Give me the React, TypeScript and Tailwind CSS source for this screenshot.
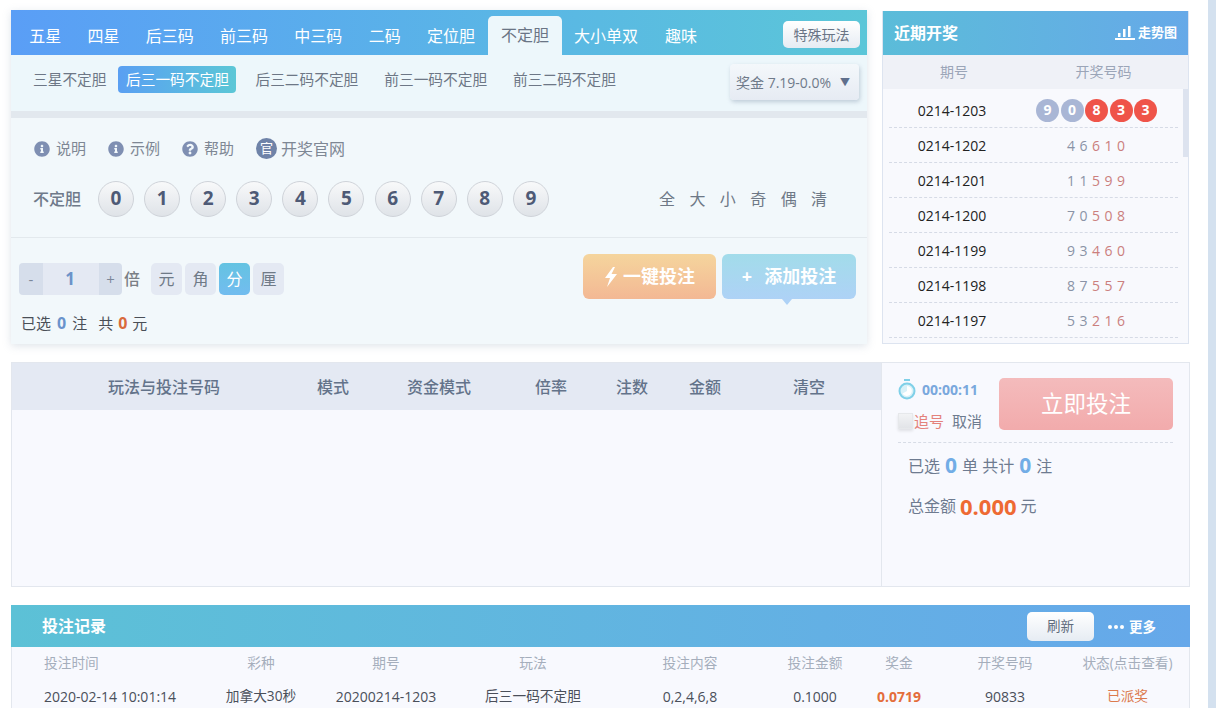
import React from "react";
import { FaInfoCircle, FaQuestionCircle } from "react-icons/fa";

const tabs = ["五星", "四星", "后三码", "前三码", "中三码", "二码", "定位胆"];
const subs = ["后三二码不定胆", "前三一码不定胆", "前三二码不定胆"];
const rows: [string, string][] = [
  ["0214-1202", "46610"],
  ["0214-1201", "11599"],
  ["0214-1200", "70508"],
  ["0214-1199", "93460"],
  ["0214-1198", "87557"],
  ["0214-1197", "53216"],
];
const recCols = "grid grid-cols-[184px_130px_120px_174px_140px_110px_58px_154px_91px] text-center";

function Help({ icon, label, w }: { icon: React.ReactNode; label: string; w: string }) {
  return (
    <div className={`flex items-center gap-[6px] ${w}`}>
      <span className="text-[#7f8fb2] text-[16px]">{icon}</span>
      <span className="text-[15px] text-[#7e8794]">{label}</span>
    </div>
  );
}

function Unit({ t, active }: { t: string; active?: boolean }) {
  return (
    <div
      className={`w-[31px] h-[32px] rounded-[5px] flex items-center justify-center text-[16px] ${
        active ? "bg-gradient-to-b from-[#64c3e2] to-[#72bcef] text-white" : "bg-[#e4e9f3] text-[#6f7a87]"
      }`}
    >
      {t}
    </div>
  );
}

export default function App() {
  return (
    <div className="w-[1216px] h-[708px] overflow-hidden flex bg-white font-['Open_Sans','Noto_Sans_CJK_SC',sans-serif]">
      <div className="w-[1208px] pl-[11px] pt-[10px]">
        {/* top */}
        <div className="flex h-[334px]">
          <div className="w-[856px] h-[334px] shadow-[0_2px_8px_rgba(150,165,185,0.3)] flex flex-col bg-[#f2f8fb]">
            <div className="h-[45px] flex items-end bg-gradient-to-r from-[#5a9ef6] to-[#5bc6d8] pl-[5px] relative">
              {tabs.map((t) => (
                <div key={t} className="px-[13.15px] h-[37px] text-[16px] leading-[37px] text-white">
                  {t}
                </div>
              ))}
              <div className="h-[39px] w-[74px] rounded-t-[5px] bg-[#edf7fb] text-[#6a7585] text-[16px] leading-[39px] text-center">
                不定胆
              </div>
              <div className="px-[12px] h-[37px] text-[16px] leading-[37px] text-white">大小单双</div>
              <div className="pl-[15px] h-[37px] text-[16px] leading-[37px] text-white">趣味</div>
              <div className="absolute right-[7px] top-[11px] w-[77px] h-[27px] rounded-[5px] bg-gradient-to-b from-white to-[#e6ecf3] text-[#697485] text-[14px] leading-[27px] text-center">
                特殊玩法
              </div>
            </div>
            <div className="h-[56px] bg-[#edf7fb] flex items-start pl-[22px] pt-[11px] relative">
              <div className="text-[14.7px] leading-[27px] text-[#6d7786]">三星不定胆</div>
              <div className="ml-[12px] w-[118px] h-[27px] rounded-[4px] bg-gradient-to-r from-[#5a9ff2] to-[#5cc7d6] text-white text-[14.7px] leading-[26px] text-center whitespace-nowrap">
                后三一码不定胆
              </div>
              {subs.map((s, i) => (
                <div
                  key={s}
                  className={`text-[14.7px] leading-[27px] text-[#6d7786] whitespace-nowrap ${i === 0 ? "ml-[19px]" : "ml-[26px]"}`}
                >
                  {s}
                </div>
              ))}
              <div className="absolute left-[719px] top-[9px] w-[129px] h-[36px] rounded-[4px] bg-gradient-to-b from-[#f4f8fb] to-[#e6ebf3] shadow-[1px_2px_4px_rgba(120,140,165,0.4)] flex items-center justify-between pl-[6px] pr-[9px] text-[14px] text-[#6f7a8a]">
                <span className="whitespace-nowrap">奖金 7.19-0.0%</span>
                <span className="text-[#5f6f8c] text-[10px]">▼</span>
              </div>
            </div>
            <div className="h-[7px] bg-[#e2e8ee]" />
            <div className="h-[120px] shrink-0 border-b border-[#e3e9ed] flex flex-col">
              <div className="flex items-center pl-[23px] pt-[19px] h-[42px]">
                <Help icon={<FaInfoCircle />} label="说明" w="w-[74px]" />
                <Help icon={<FaInfoCircle />} label="示例" w="w-[74px]" />
                <Help icon={<FaQuestionCircle />} label="帮助" w="w-[74px]" />
                <div className="flex items-center gap-[4px]">
                  <span className="w-[21px] h-[21px] rounded-full bg-[#6f83a8] text-white text-[13px] leading-[21px] text-center">
                    官
                  </span>
                  <span className="text-[16px] text-[#7e8794]">开奖官网</span>
                </div>
              </div>
              <div className="flex items-center pl-[22px] mt-[21px] relative">
                <span className="text-[16px] text-[#6f7a8a] w-[65px] font-medium">不定胆</span>
                <div className="flex gap-[10.1px]">
                  {[0, 1, 2, 3, 4, 5, 6, 7, 8, 9].map((n) => (
                    <div
                      key={n}
                      className="w-[36px] h-[36px] rounded-full border border-[#cfd3d9] bg-gradient-to-b from-[#f8f9fa] to-[#dfe3e8] text-[#4e5a76] text-[19px] font-bold leading-[33px] text-center"
                    >
                      {n}
                    </div>
                  ))}
                </div>
                <div className="absolute left-[648px] top-[7px] flex gap-[14.4px] text-[16px] text-[#6e7886] leading-[22px]">
                  {["全", "大", "小", "奇", "偶", "清"].map((t) => (
                    <span key={t}>{t}</span>
                  ))}
                </div>
              </div>
            </div>
            <div className="flex-1 relative pl-[8px] pt-[16px]">
              <div className="flex items-center mt-[9px]">
                <div className="flex w-[103px] h-[32px] rounded-[4px] overflow-hidden text-[#7b8799]">
                  <div className="w-[24px] bg-[#d6deeb] flex items-center justify-center text-[15px]">-</div>
                  <div className="w-[56px] pr-[2px] bg-[#e4e9f3] text-[#6c93c9] text-[17px] font-bold flex items-center justify-center">1</div>
                  <div className="w-[23px] bg-[#d6deeb] flex items-center justify-center text-[15px]">+</div>
                </div>
                <span className="ml-[2px] text-[16px] font-medium text-[#7a7f85]">倍</span>
                <div className="flex gap-[3px] ml-[11px]">
                  <Unit t="元" />
                  <Unit t="角" />
                  <Unit t="分" active />
                  <Unit t="厘" />
                </div>
              </div>
              <div className="ml-[2px] mt-[15px] text-[15px] text-[#4a4f57] flex items-center h-[26px]">
                已选
                <b className="mx-[6px] text-[16px] text-[#6a93cc]">0</b>注
                <span className="ml-[11px]">共</span>
                <b className="mx-[5px] text-[16px] text-[#d96a3c]">0</b>元
              </div>
              <div className="absolute right-[11px] top-[16px] flex gap-[6px]">
                <div className="w-[133px] h-[45px] rounded-[6px] bg-gradient-to-b from-[#f5d59d] to-[#f3b894] text-white text-[18px] font-bold flex items-center justify-center gap-[6px]">
                  <svg width="13" height="20" viewBox="0 0 13 20" fill="white">
                    <path d="M9 0 L1 11 H6 L3 20 L13 7 H7.5 L11 0Z" />
                  </svg>
                  一键投注
                </div>
                <div className="relative w-[134px] h-[45px] rounded-[6px] bg-gradient-to-b from-[#a2dcea] to-[#aed2f6] text-white text-[18px] font-bold flex items-center justify-center gap-[12px]">
                  <span>+</span>
                  添加投注
                  <span className="absolute left-[60px] bottom-[-6px] w-0 h-0 border-l-[5px] border-r-[5px] border-t-[6px] border-l-transparent border-r-transparent border-t-[#aed2f6]" />
                </div>
              </div>
            </div>
          </div>

          {/* draw panel */}
          <div className="ml-[15px] mt-[1px] w-[307px] h-[333px] border border-[#dde4f0] border-t-0 flex flex-col bg-[#f8f9fd] relative overflow-hidden">
            <div className="h-[44px] bg-gradient-to-r from-[#5bbcd9] to-[#66a9e8] flex items-center justify-between pl-[11px] pr-[11px] text-white shrink-0">
              <span className="text-[16px] font-bold">近期开奖</span>
              <div className="flex items-center gap-[3px] text-[13px] font-bold">
                <svg width="20" height="16" viewBox="0 0 20 16" fill="white">
                  <rect x="0" y="13" width="20" height="2" />
                  <rect x="3" y="8" width="2.5" height="4" />
                  <rect x="8" y="4" width="2.5" height="8" />
                  <rect x="13" y="1" width="2.5" height="11" />
                </svg>
                走势图
              </div>
            </div>
            <div className="h-[34px] shrink-0 bg-[#eff1f7] grid grid-cols-[142px_1fr] text-[14px] text-[#9ba5b8] text-center leading-[34px]">
              <span>期号</span>
              <span className="pr-[6px]">开奖号码</span>
            </div>
            <div className="pt-[4px] px-[6px] pr-[10px]">
              <div className="h-[35px] border-b border-dashed border-[#d6dbe6] flex items-center">
                <span className="w-[126px] text-center text-[14px] text-[#222]">0214-1203</span>
                <div className="flex gap-[1.5px] ml-[21px]">
                  {["9", "0", "8", "3", "3"].map((d, i) => (
                    <span
                      key={i}
                      className={`w-[23px] h-[23px] rounded-full text-white text-[14px] font-bold leading-[22px] text-center ${
                        i < 2 ? "bg-[#a9b6d5]" : "bg-[#ef5449]"
                      }`}
                    >
                      {d}
                    </span>
                  ))}
                </div>
              </div>
              {rows.map(([p, n]) => (
                <div key={p} className="h-[35px] border-b border-dashed border-[#d6dbe6] flex items-center">
                  <span className="w-[126px] text-center text-[14px] text-[#222]">{p}</span>
                  <div className="flex ml-[52px] text-[14px]">
                    {n.split("").map((d, i) => (
                      <span key={i} className={`w-[12.5px] ${i < 2 ? "text-[#8a93a6]" : "text-[#cb7f7d]"}`}>
                        {d}
                      </span>
                    ))}
                  </div>
                </div>
              ))}
            </div>
            <div className="absolute right-0 top-[78px] w-[5px] h-[68px] bg-[#dde3ef]" />
          </div>
        </div>

        {/* middle */}
        <div className="mt-[18px] flex w-[1179px] h-[225px] border border-[#e3e7ee] bg-[#f8f9fe]">
          <div className="w-[870px] border-r border-[#e3e7ee] h-full">
            <div className="h-[47px] bg-[#e4e9f3] relative flex items-center text-[16px] font-medium text-[#63738a]">
              <span className="absolute left-[96px]">玩法与投注号码</span>
              <span className="absolute left-[305px]">模式</span>
              <span className="absolute left-[395px]">资金模式</span>
              <span className="absolute left-[523px]">倍率</span>
              <span className="absolute left-[604px]">注数</span>
              <span className="absolute left-[677px]">金额</span>
              <span className="absolute left-[781px]">清空</span>
            </div>
          </div>
          <div className="flex-1 px-[16px] pt-[15px]">
            <div className="flex h-[64px] justify-between">
              <div>
                <div className="flex items-center gap-[6px] h-[22px]">
                  <svg width="18" height="21" viewBox="0 0 18 21">
                    <rect x="6" y="0" width="6" height="2" fill="#7fd0e8" />
                    <circle cx="9" cy="12" r="7.5" fill="#d9f1f8" stroke="#7fd0e8" strokeWidth="2" />
                    <path d="M9 12V7A5 5 0 1 1 4.5 14.5Z" fill="#ffffff" />
                  </svg>
                  <span className="text-[14px] font-bold text-[#7aa8dd]">00:00:11</span>
                </div>
                <div className="flex items-center mt-[10px] text-[15px]">
                  <span className="w-[15px] h-[16px] bg-gradient-to-b from-[#f2f3f5] to-[#e2e4e8] shadow-[0_2px_3px_rgba(0,0,0,0.1)] border border-[#e6e8eb]" />
                  <span className="ml-[1px] text-[#e4827c]">追号</span>
                  <span className="ml-[8px] text-[#6e7b8f]">取消</span>
                </div>
              </div>
              <div className="w-[174px] h-[52px] rounded-[5px] bg-gradient-to-b from-[#f4bbbc] to-[#f2abac] text-white text-[22.5px] leading-[52px] text-center">
                立即投注
              </div>
            </div>
            <div className="border-t border-dashed border-[#d7dce6] pl-[10px] pt-[9px]">
              <div className="flex items-center h-[28px] text-[16px] text-[#6e7b90]">
                已选<b className="mx-[5px] text-[21px] text-[#72ade6]">0</b>单 共计<b className="mx-[5px] text-[21px] text-[#72ade6]">0</b>注
              </div>
              <div className="flex items-center h-[30px] mt-[11px] text-[16px] text-[#6e7b90]">
                总金额<b className="mx-[4px] text-[22px] text-[#ee6a33]">0.000</b>元
              </div>
            </div>
          </div>
        </div>

        {/* records */}
        <div className="mt-[18px] w-[1179px] bg-[#f8f9fe]">
          <div className="h-[42px] bg-gradient-to-r from-[#5cc1d6] to-[#66a8ea] flex items-center pl-[31px] text-white relative">
            <span className="text-[16px] font-bold">投注记录</span>
            <div className="absolute left-[1016px] top-[7px] w-[67px] h-[29px] rounded-[5px] bg-gradient-to-b from-white to-[#e6ecf3] text-[#5f6b7c] text-[13.5px] leading-[29px] text-center">
              刷新
            </div>
            <div className="absolute left-[1097px] top-[12px] flex items-center gap-[5px] text-[13.5px] font-bold">
              <span className="flex gap-[2px]">
                <span className="w-[4px] h-[4px] rounded-full bg-white" />
                <span className="w-[4px] h-[4px] rounded-full bg-white" />
                <span className="w-[4px] h-[4px] rounded-full bg-white" />
              </span>
              更多
            </div>
          </div>
          <div className="border-x border-[#e3e7ee]">
            <div className={`${recCols} h-[32px] items-center text-[13.7px] text-[#a5aebc]`}>
              <span className="text-left pl-[32px]">投注时间</span>
              <span>彩种</span>
              <span>期号</span>
              <span>玩法</span>
              <span>投注内容</span>
              <span>投注金额</span>
              <span>奖金</span>
              <span>开奖号码</span>
              <span className="whitespace-nowrap">状态(点击查看)</span>
            </div>
            <div className={`${recCols} h-[35px] items-center text-[13.7px] text-[#4a4f5a]`}>
              <span className="text-left pl-[32px] text-[14px] whitespace-nowrap">2020-02-14 10:01:14</span>
              <span>加拿大30秒</span>
              <span className="text-[14px]">20200214-1203</span>
              <span>后三一码不定胆</span>
              <span className="text-[14px]">0,2,4,6,8</span>
              <span className="text-[14px]">0.1000</span>
              <span className="text-[14px] font-bold text-[#e46d3b]">0.0719</span>
              <span className="text-[14px]">90833</span>
              <span className="text-[#dc7a4e]">已派奖</span>
            </div>
          </div>
        </div>
      </div>
      <div className="w-[8px] h-full bg-[#d4e1ef]" />
    </div>
  );
}
